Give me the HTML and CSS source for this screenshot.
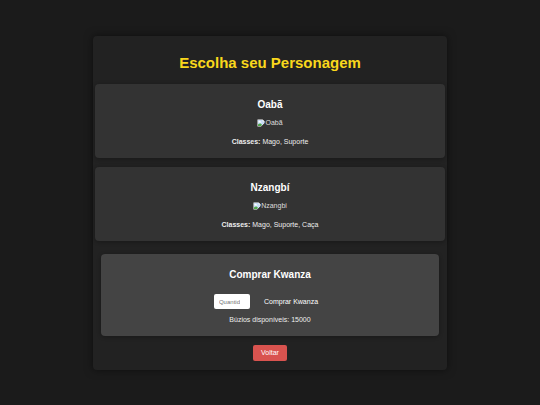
FILE: index.html
```html
<!DOCTYPE html>
<html lang="pt-BR">
<head>
    <meta charset="UTF-8">
    <meta name="viewport" content="width=device-width, initial-scale=1.0">
    <title>Escolha seu Personagem</title>
    <link rel="stylesheet" href="styles.css">
</head>
<body>

    <main class="container">
        <h1>Escolha seu Personagem</h1>

        <section class="personagem">
            <h2>Oabã</h2>
            <div class="retrato">
                <svg class="icone" viewBox="0 0 16 16" aria-hidden="true">
                    <path d="M1 1h10l4 4v3l-7 7H1z" fill="#fff"/>
                    <path d="M2 2h9l3 3v3l-6 6H2z" fill="#c3d9f5"/>
                    <path d="M3 6a2 2 0 0 1 4-1 2 2 0 0 1 2 2H3z" fill="#fff"/>
                    <path d="M2 14v-3c3-3 6-3 8 1l-2 2z" fill="#4fa548"/>
                    <path d="M11 1v4h4z" fill="#eee"/>
                </svg>
                <span>Oabã</span>
            </div>
            <p><strong>Classes:</strong> Mago, Suporte</p>
        </section>

        <section class="personagem">
            <h2>Nzangbí</h2>
            <div class="retrato">
                <svg class="icone" viewBox="0 0 16 16" aria-hidden="true">
                    <path d="M1 1h10l4 4v3l-7 7H1z" fill="#fff"/>
                    <path d="M2 2h9l3 3v3l-6 6H2z" fill="#c3d9f5"/>
                    <path d="M3 6a2 2 0 0 1 4-1 2 2 0 0 1 2 2H3z" fill="#fff"/>
                    <path d="M2 14v-3c3-3 6-3 8 1l-2 2z" fill="#4fa548"/>
                    <path d="M11 1v4h4z" fill="#eee"/>
                </svg>
                <span>Nzangbi</span>
            </div>
            <p><strong>Classes:</strong> Mago, Suporte, Caça</p>
        </section>

        <section class="loja">
            <h2>Comprar Kwanza</h2>
            <form class="compra">
                <input type="number" id="quantidade" placeholder="Quantidade" aria-label="Quantidade" min="1">
                <button type="button" class="comprar">Comprar Kwanza</button>
            </form>
            <p>Búzios disponíveis: 15000</p>
        </section>

        <button type="button" class="voltar">Voltar</button>
    </main>

</body>
</html>
```

FILE: styles.css
```css
/* Geral */
* {
    box-sizing: border-box;
}

body {
    font-family: Arial, "Liberation Sans", sans-serif;
    font-size: 7px;
    line-height: 8px;
    margin: 0;
    min-height: 100vh;
    display: flex;
    justify-content: center;
    align-items: center;
    background-color: #1b1b1b;
    color: #fff;
    text-align: center;
}

.container {
    width: 90%;
    max-width: 354px;
    padding: 18px 2px 9px;
    background-color: #222;
    border-radius: 4px;
    box-shadow: 0 0 9px rgba(0, 0, 0, 0.5);
}

h1 {
    margin: 0 0 12px;
    font-size: 15px;
    line-height: 18px;
    color: #f9d71c;
}

h2 {
    margin: 0;
    font-size: 10px;
    line-height: 12px;
}

p {
    margin: 0;
    color: #eee;
}

/* Personagens */
.personagem {
    margin-bottom: 9px;
    padding: 15px 9px 12px;
    background-color: #333;
    border-radius: 4px;
    box-shadow: 0 1px 4px rgba(0, 0, 0, 0.3);
}

.retrato {
    display: flex;
    justify-content: center;
    align-items: center;
    margin: 8px 0 11px;
    color: #ddd;
}

.icone {
    width: 8px;
    height: 8px;
}

/* Loja */
.loja {
    margin: 13px 6px 9px;
    padding: 15px 9px 12px;
    background-color: #444;
    border-radius: 4px;
    box-shadow: 0 1px 4px rgba(0, 0, 0, 0.3);
}

.compra {
    display: flex;
    justify-content: center;
    align-items: center;
    gap: 6px;
    margin: 13px 0 6px;
}

input {
    width: 36px;
    height: 15px;
    padding: 0 10px 0 5px;
    border: none;
    border-radius: 2px;
    font-family: inherit;
    font-size: 6px;
    background-color: #fff;
    color: #222;
    appearance: textfield;
}

input::placeholder {
    color: #757575;
}

input::-webkit-inner-spin-button {
    display: none;
}

button {
    border: none;
    border-radius: 2px;
    padding: 4px 8px;
    font-family: inherit;
    font-size: 7px;
    line-height: 8px;
    color: #fff;
    cursor: pointer;
}

.comprar {
    background-color: transparent;
}

.voltar {
    background-color: #d9534f;
}
```
